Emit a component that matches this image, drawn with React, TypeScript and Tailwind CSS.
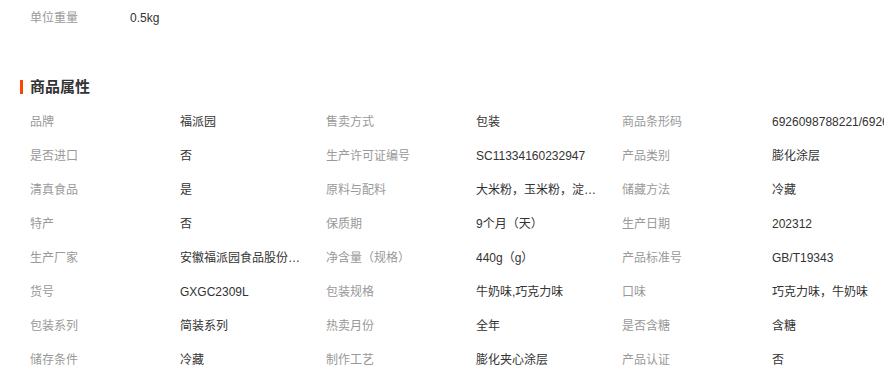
import { memo } from 'react';

type Attr = { label: string; value: string };

const attrs: Attr[] = [
  { label: '品牌', value: '福派园' },
  { label: '售卖方式', value: '包装' },
  { label: '商品条形码', value: '6926098788221/6926098788238' },
  { label: '是否进口', value: '否' },
  { label: '生产许可证编号', value: 'SC11334160232947' },
  { label: '产品类别', value: '膨化涂层' },
  { label: '清真食品', value: '是' },
  { label: '原料与配料', value: '大米粉，玉米粉，淀粉，白砂糖' },
  { label: '储藏方法', value: '冷藏' },
  { label: '特产', value: '否' },
  { label: '保质期', value: '9个月（天）' },
  { label: '生产日期', value: '202312' },
  { label: '生产厂家', value: '安徽福派园食品股份有限公司' },
  { label: '净含量（规格）', value: '440g（g）' },
  { label: '产品标准号', value: 'GB/T19343' },
  { label: '货号', value: 'GXGC2309L' },
  { label: '包装规格', value: '牛奶味,巧克力味' },
  { label: '口味', value: '巧克力味，牛奶味' },
  { label: '包装系列', value: '简装系列' },
  { label: '热卖月份', value: '全年' },
  { label: '是否含糖', value: '含糖' },
  { label: '储存条件', value: '冷藏' },
  { label: '制作工艺', value: '膨化夹心涂层' },
  { label: '产品认证', value: '否' },
];

const AttrItem = ({ label, value, last }: Attr & { last: boolean }) => (
  <div className="flex h-[34px] items-center">
    <div className="w-[150px] flex-none text-[#999]">{label}</div>
    <div
      className={
        last
          ? 'whitespace-nowrap text-[#333]'
          : 'max-w-[123px] truncate text-[#333]'
      }
    >
      {value}
    </div>
  </div>
);

const PureApp = () => {
  return (
    <div
      className="h-[386px] w-[884px] overflow-hidden bg-white text-[12px]"
      style={{ fontFamily: '"Liberation Sans", "Noto Sans CJK SC", sans-serif' }}
    >
      <div className="flex h-[34px] items-center pl-[30px] pt-[2px]">
        <div className="w-[100px] text-[#999]">单位重量</div>
        <div className="text-[#333]">0.5kg</div>
      </div>

      <div className="mt-[43px] flex h-[20px] items-center pl-[20px]">
        <div className="mr-[7px] h-[14px] w-[3px] bg-[#ff4400]" />
        <div className="text-[15px] font-bold text-[#333]">商品属性</div>
      </div>

      <div className="mt-[8px] grid w-max grid-cols-[296px_296px_296px] pl-[30px]">
        {attrs.map((a, i) => (
          <AttrItem key={i} {...a} last={i % 3 === 2} />
        ))}
      </div>
    </div>
  );
};

export default memo(PureApp);
